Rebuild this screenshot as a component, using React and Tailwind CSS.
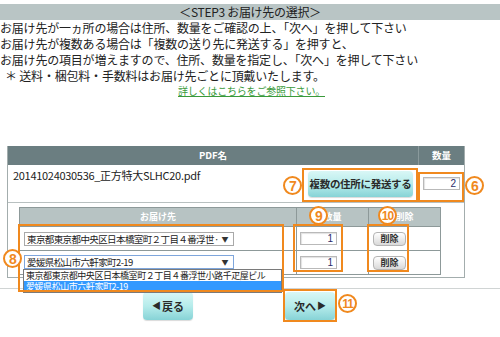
import React from 'react';

const Marker = ({ n, x, y }) => (
  <div
    className="absolute w-[19px] h-[19px] rounded-full border-2 border-[#f0891e] bg-white flex items-center justify-center text-[#f0891e] font-bold leading-none font-['Liberation_Sans',sans-serif] tracking-[-1px]"
    style={{ left: x - 9, top: y - 9, fontSize: n > 9 ? 12 : 14 }}
  >
    {n}
  </div>
);

const Frame = ({ x, y, w, h }) => (
  <div
    className="absolute border-2 border-[#f0891e] pointer-events-none"
    style={{ left: x, top: y, width: w, height: h }}
  />
);

const FakeSelect = ({ text, focused }) => (
  <div
    className={
      'ml-[4px] w-[210px] h-[14px] bg-white flex items-center justify-between pl-[2px] pr-[5px] text-[9.5px] leading-[12px] tracking-[-0.6px] text-[#222] ' +
      (focused ? 'border border-[#7ea6dc]' : 'border border-[#a9a9a9]')
    }
  >
    <span className="whitespace-nowrap">{text}</span>
    <span className="text-[7px] text-[#333]">▼</span>
  </div>
);

const QtyInput = ({ value, w = 'w-[37px]' }) => (
  <div
    className={
      w +
      ' h-[13px] bg-white border border-[#b9b9b9] shadow-[inset_1px_1px_1px_rgba(0,0,0,0.12)] text-right pr-[3px] text-[10px] leading-[11px] text-[#2b2b6b] font-[\'Liberation_Sans\',sans-serif]'
    }
  >
    {value}
  </div>
);

const DeleteButton = () => (
  <div className="ml-[4px] w-[33px] h-[14px] rounded-[4px] border border-[#b4b4b4] bg-linear-to-b from-[#ffffff] to-[#d9d9d9] flex items-center justify-center text-[9px] text-[#333] font-bold">
    削除
  </div>
);

const TealButton = ({ children, className }) => (
  <div
    className={
      'rounded-[4px] bg-linear-to-b from-[#d9f7f6] via-[#b6eceb] to-[#86d3d6] shadow-[0_1px_1px_rgba(0,0,0,0.15)] flex items-center justify-center font-bold text-[#2a2a2a] ' +
      className
    }
  >
    {children}
  </div>
);

export default function App() {
  return (
    <div className="relative w-[500px] h-[337px] bg-white overflow-hidden font-['Noto_Sans_CJK_JP',sans-serif] text-[#222]">
      <div className="pt-[4px]">
        <div className="h-[16px] bg-[#b9c5c5] text-center text-[12px] leading-[16px] tracking-[-0.3px]">
          ＜STEP3 お届け先の選択＞
        </div>
        <div className="text-[12px] leading-[16px] tracking-[-0.2px] whitespace-nowrap">
          <p>お届け先が一ヵ所の場合は住所、数量をご確認の上、「次へ」を押して下さい</p>
          <p>お届け先が複数ある場合は「複数の送り先に発送する」を押すと、</p>
          <p>お届け先の項目が増えますので、住所、数量を指定し、「次へ」を押して下さい</p>
          <p className="pl-[5px]">＊ 送料・梱包料・手数料はお届け先ごとに頂戴いたします。</p>
        </div>
        <p className="pl-[178px] text-[10px] leading-[14px] text-[#3a9a3a] underline tracking-[-0.2px]">
          詳しくはこちらをご参照下さい。
        </p>
      </div>

      {/* outer table */}
      <div className="mt-[48px] ml-[7px] w-[458px] border-l border-r border-b border-[#a3adad]">
        <div className="grid grid-cols-[411px_1fr] h-[19px] bg-[#6b7e81] text-white text-[9.5px] font-bold">
          <div className="flex items-center justify-center border-r border-[#8a9a9c]">PDF名</div>
          <div className="flex items-center justify-center">数量</div>
        </div>
        <div className="grid grid-cols-[411px_1fr] h-[38px] border-b border-[#b8c0c0]">
          <div className="flex justify-between pl-[5px] pr-[6px]">
            <span className="pt-[3px] text-[11px] leading-[14px] tracking-[-0.3px]">
              20141024030536_正方特大SLHC20.pdf
            </span>
            <TealButton className="mt-[6px] w-[105px] h-[26px] text-[10.5px] tracking-[-0.3px]">
              複数の住所に発送する
            </TealButton>
          </div>
          <div className="flex items-center pl-[4px]">
            <QtyInput value="2" />
          </div>
        </div>
        <div className="pt-[4px] pb-[2px]">
          <div className="ml-[11px] w-[422px] border border-[#8d9999]">
            <div className="grid grid-cols-[277px_72px_1fr] h-[18px] bg-[#b7c3c3] text-white text-[9px] font-bold">
              <div className="flex items-center justify-center border-r border-[#8d9999]">お届け先</div>
              <div className="flex items-center justify-center border-r border-[#8d9999]">数量</div>
              <div className="flex items-center justify-center">削除</div>
            </div>
            <div className="grid grid-cols-[277px_72px_1fr] h-[24px] border-t border-[#8d9999]">
              <div className="flex items-center border-r border-[#8d9999]">
                <FakeSelect text="東京都東京都中央区日本橋室町２丁目４番浮世·" />
              </div>
              <div className="flex items-center pl-[3px] border-r border-[#8d9999]">
                <QtyInput value="1" />
              </div>
              <div className="flex items-center">
                <DeleteButton />
              </div>
            </div>
            <div className="grid grid-cols-[277px_72px_1fr] h-[24px] border-t border-[#8d9999]">
              <div className="flex items-start pt-[4px] border-r border-[#8d9999]">
                <FakeSelect text="愛媛県松山市六軒家町2-19" focused />
              </div>
              <div className="flex items-center pl-[3px] border-r border-[#8d9999]">
                <QtyInput value="1" />
              </div>
              <div className="flex items-center">
                <DeleteButton />
              </div>
            </div>
          </div>
        </div>
      </div>

      <div className="mt-[10px] border-t border-[#d0d4d4] pt-[3px] flex pl-[143px] gap-[92px]">
        <TealButton className="w-[50px] h-[28px] text-[11px]">
          <span className="text-[9px] mr-[1px]">◀</span>戻る
        </TealButton>
        <TealButton className="w-[50px] h-[28px] text-[11px]">
          次へ<span className="text-[9px] ml-[1px]">▶</span>
        </TealButton>
      </div>

      {/* open dropdown list */}
      <div className="absolute left-[23px] top-[269px] w-[259px] border border-[#7a7a7a] bg-white text-[9px] tracking-[-0.45px] whitespace-nowrap">
        <div className="h-[11px] leading-[11px] pl-[2px] text-[#222] overflow-hidden">東京都東京都中央区日本橋室町２丁目４番浮世小路千疋屋ビル</div>
        <div className="h-[11px] leading-[11px] pl-[2px] bg-[#3399ff] text-white overflow-hidden">愛媛県松山市六軒家町2-19</div>
      </div>

      {/* annotations */}
      <Frame x={302} y={168} w={116} h={34} />
      <Frame x={418} y={172} w={46} h={30} />
      <Frame x={18} y={224} w={266} h={68} />
      <Frame x={293} y={224} w={50} h={48} />
      <Frame x={367} y={224} w={42} h={48} />
      <Frame x={283} y={289} w={54} h={33} />

      <Marker n={6} x={474} y={185} />
      <Marker n={7} x={292} y={185} />
      <Marker n={8} x={12} y={258} />
      <Marker n={9} x={318} y={215} />
      <Marker n={10} x={387} y={215} />
      <Marker n={11} x={347} y={303} />
    </div>
  );
}
